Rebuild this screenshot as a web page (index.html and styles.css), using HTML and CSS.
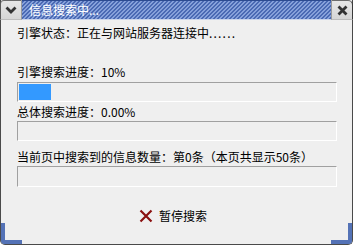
FILE: index.html
```html
<!DOCTYPE html>
<html lang="zh-CN">
<head>
<meta charset="utf-8">
<title>信息搜索中...</title>
<link rel="stylesheet" href="styles.css">
</head>
<body>
<div class="window">
  <div class="titlebar">
    <div class="tb-btn tb-menu">
      <svg width="12" height="8" viewBox="0 0 12 8"><path d="M1.5 1.5 L6 6 L10.5 1.5" fill="none" stroke="#333" stroke-width="2.8"/></svg>
    </div>
    <div class="tb-title">信息搜索中...</div>
    <div class="tb-btn tb-close">
      <svg width="11" height="11" viewBox="0 0 11 11"><path d="M1.5 1.5 L9.5 9.5 M9.5 1.5 L1.5 9.5" fill="none" stroke="#333" stroke-width="2.8"/></svg>
    </div>
  </div>
  <div class="content">
    <div class="line status">引擎状态：正在与网站服务器连接中<span class="dots">......</span></div>
    <div class="line l2">引擎搜索进度：10%</div>
    <div class="bar b1"><div class="fill" style="width:10%"></div></div>
    <div class="line l3">总体搜索进度：0.00%</div>
    <div class="bar b2"></div>
    <div class="line l4">当前页中搜索到的信息数量：第0条（本页共显示50条）</div>
    <div class="bar b3"></div>
    <div class="actions">
      <div class="stop-btn">
        <svg class="stop-icon" width="14" height="14" viewBox="0 0 14 14"><path d="M1.5 1.5 L12.5 12.5 M12.5 1.5 L1.5 12.5" fill="none" stroke="#8a1010" stroke-width="2.2"/></svg>
        <span>暂停搜索</span>
      </div>
    </div>
  </div>
  <div class="corner corner-l"></div>
  <div class="corner corner-r"></div>
</div>
</body>
</html>
```
FILE: styles.css
```css
* { box-sizing: border-box; }
html, body { margin: 0; padding: 0; background: #ffffff; }
body {
  width: 353px;
  height: 245px;
  overflow: hidden;
  font-family: "Noto Sans CJK SC", "DejaVu Sans", sans-serif;
  font-size: 12px;
  color: #000;
}
.window {
  position: relative;
  width: 353px;
  height: 245px;
  background: #efefef;
  border: 1px solid #4a4a4a;
  border-top: none;
  border-radius: 0 0 5px 5px;
  display: flex;
  flex-direction: column;
}
.titlebar {
  display: flex;
  height: 20px;
  margin: 0 -1px;
}
.tb-btn {
  width: 22px;
  height: 20px;
  background: linear-gradient(#e6e6e6, #d6d6d6);
  display: flex;
  align-items: center;
  justify-content: center;
  border-top: 1px solid #6b6b6b;
  border-bottom: 1px solid #bdbdbd;
}
.tb-menu {
  border-left: 1px solid #5a5a5a;
  border-top-left-radius: 4px;
  border-right: 1px solid #9a9a9a;
}
.tb-close {
  border-right: 1px solid #3a3a3a;
  border-top-right-radius: 5px;
  border-left: 1px solid #9a9a9a;
}
.tb-title {
  flex: 1;
  height: 20px;
  color: #ffffff;
  line-height: 18px;
  padding-left: 7px;
  font-size: 12px;
  border-top: 1px solid #2c4a90;
  border-bottom: 1px solid #c9d3ea;
  background:
    repeating-linear-gradient(135deg, #4a69b3 0 1.6px, #86a0da 1.6px 2.83px);
}
.content {
  flex: 1;
  padding: 0 15px 0 16px;
  display: flex;
  flex-direction: column;
}
.line {
  height: 16px;
  line-height: 16px;
  white-space: nowrap;
}
.dots { letter-spacing: 1.2px; }
.status { margin-top: 5px; }
.l2 { margin-top: 23px; }
.l3 { margin-top: 2px; }
.l4 { margin-top: 8px; }
.bar {
  height: 20px;
  border-top: 1px solid #a0a0a0;
  border-left: 1px solid #a0a0a0;
  border-bottom: 1px solid #ffffff;
  border-right: 1px solid #ffffff;
  padding: 1px;
}
.b1 { margin-top: 2px; }
.b2 { margin-top: 1px; }
.b3 { margin-top: 1px; height: 21px; }
.fill {
  height: 100%;
  background: #3399ff;
}
.actions {
  margin-top: 21px;
  display: flex;
  justify-content: center;
  padding-right: 8px;
}
.stop-btn {
  display: flex;
  align-items: center;
  gap: 6px;
  height: 16px;
  line-height: 16px;
  font-size: 12px;
}
.stop-icon { display: block; }
.corner {
  position: absolute;
  bottom: 0;
  width: 21px;
  height: 21px;
  border-bottom: 4px solid #5472b6;
}
.corner-l {
  left: 0;
  border-left: 4px solid #5472b6;
  border-bottom-left-radius: 4px;
}
.corner-r {
  right: 0;
  border-right: 4px solid #5472b6;
  border-bottom-right-radius: 4px;
}
```
